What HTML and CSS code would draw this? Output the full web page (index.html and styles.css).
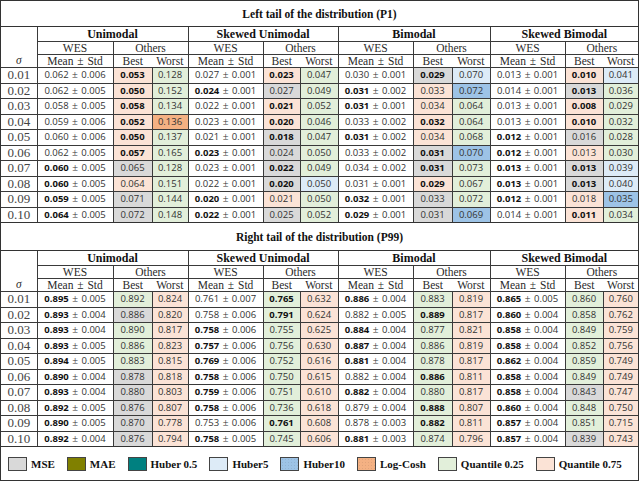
FILE: index.html
```html
<!DOCTYPE html>
<html>
<head>
<meta charset="utf-8">
<link rel="stylesheet" href="styles.css">
</head>
<body>
<div class="frame">
  <div class="title first">Left tail of the distribution (P1)</div>
  <table class="grid">
    <colgroup>
      <col class="c-sig"><col class="c-mean"><col class="c-b1"><col class="c-w1">
      <col class="c-mean2"><col class="c-b2"><col class="c-w2">
      <col class="c-mean2"><col class="c-b1"><col class="c-w2">
      <col class="c-mean2"><col class="c-w2"><col class="c-last">
    </colgroup>
    <thead>
      <tr class="h-group"><th rowspan="3" class="sig-h">σ</th><th colspan="3">Unimodal</th><th colspan="3">Skewed Unimodal</th><th colspan="3">Bimodal</th><th colspan="3">Skewed Bimodal</th></tr>
      <tr class="h-sub"><th>WES</th><th colspan="2">Others</th><th>WES</th><th colspan="2">Others</th><th>WES</th><th colspan="2">Others</th><th>WES</th><th colspan="2">Others</th></tr>
      <tr class="h-col"><th>Mean <span class="pmh">±</span> Std</th><th class="nb">Best</th><th>Worst</th><th>Mean <span class="pmh">±</span> Std</th><th class="nb">Best</th><th>Worst</th><th>Mean <span class="pmh">±</span> Std</th><th class="nb">Best</th><th>Worst</th><th>Mean <span class="pmh">±</span> Std</th><th class="nb">Best</th><th>Worst</th></tr>
    </thead>
    <tbody>
      <tr><td class="s">0.01</td><td>0.062 <span class="pm">±</span> 0.006</td><td class="q3"><b>0.053</b></td><td class="q1">0.128</td><td>0.027 <span class="pm">±</span> 0.001</td><td class="q3"><b>0.023</b></td><td class="q1">0.047</td><td>0.030 <span class="pm">±</span> 0.001</td><td class="g"><b>0.029</b></td><td class="h5">0.070</td><td>0.013 <span class="pm">±</span> 0.001</td><td class="q3"><b>0.010</b></td><td class="h5">0.041</td></tr>
      <tr><td class="s">0.02</td><td>0.062 <span class="pm">±</span> 0.005</td><td class="q3"><b>0.050</b></td><td class="q1">0.152</td><td><b>0.024</b> <span class="pm">±</span> 0.001</td><td class="g">0.027</td><td class="q1">0.049</td><td><b>0.031</b> <span class="pm">±</span> 0.002</td><td class="q3">0.033</td><td class="h10">0.072</td><td>0.014 <span class="pm">±</span> 0.001</td><td class="g"><b>0.013</b></td><td class="q1">0.036</td></tr>
      <tr><td class="s">0.03</td><td>0.058 <span class="pm">±</span> 0.005</td><td class="q3"><b>0.058</b></td><td class="q1">0.134</td><td>0.022 <span class="pm">±</span> 0.001</td><td class="q3"><b>0.021</b></td><td class="q1">0.052</td><td><b>0.031</b> <span class="pm">±</span> 0.001</td><td class="q3">0.034</td><td class="q1">0.064</td><td>0.013 <span class="pm">±</span> 0.001</td><td class="q3"><b>0.008</b></td><td class="q1">0.029</td></tr>
      <tr><td class="s">0.04</td><td>0.059 <span class="pm">±</span> 0.006</td><td class="q3"><b>0.052</b></td><td class="lc">0.136</td><td>0.023 <span class="pm">±</span> 0.001</td><td class="q3"><b>0.020</b></td><td class="q1">0.046</td><td>0.033 <span class="pm">±</span> 0.002</td><td class="q3"><b>0.032</b></td><td class="q1">0.064</td><td>0.013 <span class="pm">±</span> 0.001</td><td class="q3"><b>0.010</b></td><td class="q1">0.032</td></tr>
      <tr><td class="s">0.05</td><td>0.060 <span class="pm">±</span> 0.006</td><td class="q3"><b>0.050</b></td><td class="q1">0.137</td><td>0.021 <span class="pm">±</span> 0.001</td><td class="g"><b>0.018</b></td><td class="q1">0.047</td><td><b>0.031</b> <span class="pm">±</span> 0.002</td><td class="q3">0.034</td><td class="q1">0.068</td><td><b>0.012</b> <span class="pm">±</span> 0.001</td><td class="g">0.016</td><td class="q1">0.028</td></tr>
      <tr><td class="s">0.06</td><td>0.062 <span class="pm">±</span> 0.005</td><td class="q3"><b>0.057</b></td><td class="q1">0.165</td><td><b>0.023</b> <span class="pm">±</span> 0.001</td><td class="g">0.024</td><td class="q1">0.050</td><td>0.033 <span class="pm">±</span> 0.002</td><td class="g"><b>0.031</b></td><td class="h10">0.070</td><td><b>0.012</b> <span class="pm">±</span> 0.001</td><td class="q3">0.013</td><td class="q1">0.030</td></tr>
      <tr><td class="s">0.07</td><td><b>0.060</b> <span class="pm">±</span> 0.005</td><td class="g">0.065</td><td class="q1">0.128</td><td>0.023 <span class="pm">±</span> 0.001</td><td class="g"><b>0.022</b></td><td class="q1">0.049</td><td>0.034 <span class="pm">±</span> 0.002</td><td class="g"><b>0.031</b></td><td class="q1">0.073</td><td><b>0.013</b> <span class="pm">±</span> 0.001</td><td class="g"><b>0.013</b></td><td class="h5">0.039</td></tr>
      <tr><td class="s">0.08</td><td><b>0.060</b> <span class="pm">±</span> 0.005</td><td class="q3">0.064</td><td class="q1">0.151</td><td>0.022 <span class="pm">±</span> 0.001</td><td class="g"><b>0.020</b></td><td class="h5">0.050</td><td>0.031 <span class="pm">±</span> 0.001</td><td class="q3"><b>0.029</b></td><td class="q1">0.067</td><td><b>0.013</b> <span class="pm">±</span> 0.001</td><td class="g"><b>0.013</b></td><td class="h5">0.040</td></tr>
      <tr><td class="s">0.09</td><td><b>0.059</b> <span class="pm">±</span> 0.005</td><td class="g">0.071</td><td class="q1">0.144</td><td><b>0.020</b> <span class="pm">±</span> 0.001</td><td class="q3">0.021</td><td class="q1">0.050</td><td><b>0.032</b> <span class="pm">±</span> 0.001</td><td class="g">0.033</td><td class="q1">0.072</td><td><b>0.012</b> <span class="pm">±</span> 0.001</td><td class="q3">0.018</td><td class="h10">0.035</td></tr>
      <tr><td class="s">0.10</td><td><b>0.064</b> <span class="pm">±</span> 0.005</td><td class="g">0.072</td><td class="q1">0.148</td><td><b>0.022</b> <span class="pm">±</span> 0.001</td><td class="g">0.025</td><td class="q1">0.052</td><td><b>0.029</b> <span class="pm">±</span> 0.001</td><td class="g">0.031</td><td class="h10">0.069</td><td>0.014 <span class="pm">±</span> 0.001</td><td class="q3"><b>0.011</b></td><td class="q1">0.034</td></tr>
    </tbody>
  </table>
  <div class="title second">Right tail of the distribution (P99)</div>
  <table class="grid">
    <colgroup>
      <col class="c-sig"><col class="c-mean"><col class="c-b1"><col class="c-w1">
      <col class="c-mean2"><col class="c-b2"><col class="c-w2">
      <col class="c-mean2"><col class="c-b1"><col class="c-w2">
      <col class="c-mean2"><col class="c-w2"><col class="c-last">
    </colgroup>
    <thead>
      <tr class="h-group"><th rowspan="3" class="sig-h">σ</th><th colspan="3">Unimodal</th><th colspan="3">Skewed Unimodal</th><th colspan="3">Bimodal</th><th colspan="3">Skewed Bimodal</th></tr>
      <tr class="h-sub"><th>WES</th><th colspan="2">Others</th><th>WES</th><th colspan="2">Others</th><th>WES</th><th colspan="2">Others</th><th>WES</th><th colspan="2">Others</th></tr>
      <tr class="h-col"><th>Mean <span class="pmh">±</span> Std</th><th class="nb">Best</th><th>Worst</th><th>Mean <span class="pmh">±</span> Std</th><th class="nb">Best</th><th>Worst</th><th>Mean <span class="pmh">±</span> Std</th><th class="nb">Best</th><th>Worst</th><th>Mean <span class="pmh">±</span> Std</th><th class="nb">Best</th><th>Worst</th></tr>
    </thead>
    <tbody>
      <tr><td class="s">0.01</td><td><b>0.895</b> <span class="pm">±</span> 0.005</td><td class="q1">0.892</td><td class="q3">0.824</td><td>0.761 <span class="pm">±</span> 0.007</td><td class="q1"><b>0.765</b></td><td class="q3">0.632</td><td><b>0.886</b> <span class="pm">±</span> 0.004</td><td class="q1">0.883</td><td class="q3">0.819</td><td><b>0.865</b> <span class="pm">±</span> 0.005</td><td class="q1">0.860</td><td class="q3">0.760</td></tr>
      <tr><td class="s">0.02</td><td><b>0.893</b> <span class="pm">±</span> 0.004</td><td class="g">0.886</td><td class="q3">0.820</td><td>0.758 <span class="pm">±</span> 0.006</td><td class="q1"><b>0.791</b></td><td class="q3">0.624</td><td>0.882 <span class="pm">±</span> 0.005</td><td class="q1"><b>0.889</b></td><td class="q3">0.817</td><td><b>0.860</b> <span class="pm">±</span> 0.004</td><td class="q1">0.858</td><td class="q3">0.762</td></tr>
      <tr><td class="s">0.03</td><td><b>0.893</b> <span class="pm">±</span> 0.004</td><td class="q1">0.890</td><td class="q3">0.817</td><td><b>0.758</b> <span class="pm">±</span> 0.006</td><td class="q1">0.755</td><td class="q3">0.625</td><td><b>0.884</b> <span class="pm">±</span> 0.004</td><td class="q1">0.877</td><td class="q3">0.821</td><td><b>0.858</b> <span class="pm">±</span> 0.004</td><td class="q1">0.849</td><td class="q3">0.759</td></tr>
      <tr><td class="s">0.04</td><td><b>0.893</b> <span class="pm">±</span> 0.005</td><td class="q1">0.886</td><td class="q3">0.823</td><td><b>0.757</b> <span class="pm">±</span> 0.006</td><td class="q1">0.756</td><td class="q3">0.630</td><td><b>0.887</b> <span class="pm">±</span> 0.004</td><td class="q1">0.886</td><td class="q3">0.819</td><td><b>0.858</b> <span class="pm">±</span> 0.004</td><td class="q1">0.852</td><td class="q3">0.756</td></tr>
      <tr><td class="s">0.05</td><td><b>0.894</b> <span class="pm">±</span> 0.005</td><td class="q1">0.883</td><td class="q3">0.815</td><td><b>0.769</b> <span class="pm">±</span> 0.006</td><td class="q1">0.752</td><td class="q3">0.616</td><td><b>0.881</b> <span class="pm">±</span> 0.004</td><td class="q1">0.878</td><td class="q3">0.817</td><td><b>0.862</b> <span class="pm">±</span> 0.004</td><td class="q1">0.859</td><td class="q3">0.749</td></tr>
      <tr><td class="s">0.06</td><td><b>0.890</b> <span class="pm">±</span> 0.004</td><td class="g">0.878</td><td class="q3">0.818</td><td><b>0.758</b> <span class="pm">±</span> 0.006</td><td class="q1">0.750</td><td class="q3">0.615</td><td>0.882 <span class="pm">±</span> 0.004</td><td class="q1"><b>0.886</b></td><td class="q3">0.811</td><td><b>0.858</b> <span class="pm">±</span> 0.004</td><td class="q1">0.849</td><td class="q3">0.749</td></tr>
      <tr><td class="s">0.07</td><td><b>0.893</b> <span class="pm">±</span> 0.004</td><td class="g">0.880</td><td class="q3">0.803</td><td><b>0.759</b> <span class="pm">±</span> 0.006</td><td class="q1">0.751</td><td class="q3">0.610</td><td><b>0.882</b> <span class="pm">±</span> 0.004</td><td class="q1">0.880</td><td class="q3">0.817</td><td><b>0.858</b> <span class="pm">±</span> 0.004</td><td class="g">0.843</td><td class="q3">0.747</td></tr>
      <tr><td class="s">0.08</td><td><b>0.892</b> <span class="pm">±</span> 0.005</td><td class="g">0.876</td><td class="q3">0.807</td><td><b>0.758</b> <span class="pm">±</span> 0.006</td><td class="q1">0.736</td><td class="q3">0.618</td><td>0.879 <span class="pm">±</span> 0.004</td><td class="q1"><b>0.888</b></td><td class="q3">0.807</td><td><b>0.860</b> <span class="pm">±</span> 0.004</td><td class="q1">0.848</td><td class="q3">0.750</td></tr>
      <tr><td class="s">0.09</td><td><b>0.890</b> <span class="pm">±</span> 0.005</td><td class="g">0.870</td><td class="q3">0.778</td><td>0.753 <span class="pm">±</span> 0.006</td><td class="q1"><b>0.761</b></td><td class="q3">0.608</td><td>0.878 <span class="pm">±</span> 0.003</td><td class="q1"><b>0.882</b></td><td class="q3">0.811</td><td><b>0.857</b> <span class="pm">±</span> 0.004</td><td class="q1">0.851</td><td class="q3">0.715</td></tr>
      <tr><td class="s">0.10</td><td><b>0.892</b> <span class="pm">±</span> 0.004</td><td class="g">0.876</td><td class="q3">0.794</td><td><b>0.758</b> <span class="pm">±</span> 0.005</td><td class="q1">0.745</td><td class="q3">0.606</td><td><b>0.881</b> <span class="pm">±</span> 0.003</td><td class="q1">0.874</td><td class="q3">0.796</td><td><b>0.857</b> <span class="pm">±</span> 0.004</td><td class="g">0.839</td><td class="q3">0.743</td></tr>
    </tbody>
  </table>
  <div class="legend">
    <div class="item"><span class="sw g"></span>MSE</div>
    <div class="item"><span class="sw mae"></span>MAE</div>
    <div class="item"><span class="sw hb05"></span>Huber 0.5</div>
    <div class="item"><span class="sw h5"></span>Huber5</div>
    <div class="item"><span class="sw h10 dots"></span>Huber10</div>
    <div class="item"><span class="sw lc dots"></span>Log-Cosh</div>
    <div class="item"><span class="sw q1"></span>Quantile 0.25</div>
    <div class="item"><span class="sw q3"></span>Quantile 0.75</div>
  </div>
</div>
</body>
</html>
```

FILE: styles.css
```css
body {
  margin: 0;
  background: #fff;
}

.frame {
  width: 639px;
  height: 481px;
  box-sizing: border-box;
  border: 1px solid #333;
  display: flex;
  flex-direction: column;
  font-family: "Liberation Serif", "Times New Roman", serif;
  color: #222;
}

.title {
  display: flex;
  align-items: center;
  justify-content: center;
  font-weight: bold;
  font-size: 11.5px;
  color: #111;
  box-sizing: border-box;
  flex: none;
}

.title.first {
  height: 26px;
  border-bottom: 1px solid #333;
}

.title.second {
  height: 29px;
  border-top: 1px solid #333;
  border-bottom: 1px solid #333;
}

.grid {
  border-collapse: collapse;
  table-layout: fixed;
  width: 637px;
  border-style: hidden;
  flex: none;
}

.c-sig { width: 36px; }
.c-mean { width: 76px; }
.c-mean2 { width: 75px; }
.c-b1 { width: 39px; }
.c-b2 { width: 37px; }
.c-w1 { width: 36px; }
.c-w2 { width: 38px; }
.c-last { width: 35px; }

.grid th,
.grid td {
  border: 1px solid #3a3a3a;
  padding: 0;
  text-align: center;
  vertical-align: middle;
  white-space: nowrap;
  overflow: hidden;
}

.grid th {
  font-weight: normal;
  font-size: 11.5px;
  color: #2a2a2a;
  line-height: 12px;
}

.h-group th {
  font-weight: bold;
  font-size: 12px;
  color: #111;
  height: 14px;
}

.h-sub th { height: 12px; }
.h-col th { height: 12px; }

.grid th.nb { border-right: hidden; }

.grid th.sig-h {
  vertical-align: bottom;
  font-style: italic;
  font-weight: normal;
  font-size: 11.5px;
  color: #2a2a2a;
  padding-bottom: 1px;
}

.pmh {
  font-size: 11.5px;
  margin: 0 1px;
}

.grid td {
  height: 14.5px;
  font-family: "Open Sans", "Noto Sans", sans-serif;
  font-size: 9.5px;
  color: #333;
  line-height: 12px;
}

.grid td b {
  font-weight: bold;
  color: #111;
}

.grid td.s {
  font-family: "Liberation Serif", serif;
  font-size: 13px;
  color: #444;
}

.pm {
  font-family: "Liberation Serif", serif;
  font-size: 10.5px;
  margin: 0 1px;
}

.g { background: #d9d9d9; }
.q1 { background: #e2efda; }
.q3 { background: #fbe3d6; }
.h5 { background: #ddebf7; }
.h10 { background: #9dc3e6; }
.lc { background: #f4b183; }
.mae { background: #808000; }
.hb05 { background: #008080; }

.legend {
  flex: 1;
  display: flex;
  align-items: center;
  gap: 12px;
  padding-left: 7px;
  border-top: 1px solid #333;
  font-weight: bold;
  font-size: 11px;
  color: #111;
}

.item {
  display: flex;
  align-items: center;
  gap: 4px;
}

.sw {
  width: 17px;
  height: 12px;
  border: 1px solid #444;
  display: inline-block;
}

.dots {
  background-image: radial-gradient(rgba(0, 0, 0, 0.08) 0.5px, transparent 0.8px);
  background-size: 3px 3px;
}
```
